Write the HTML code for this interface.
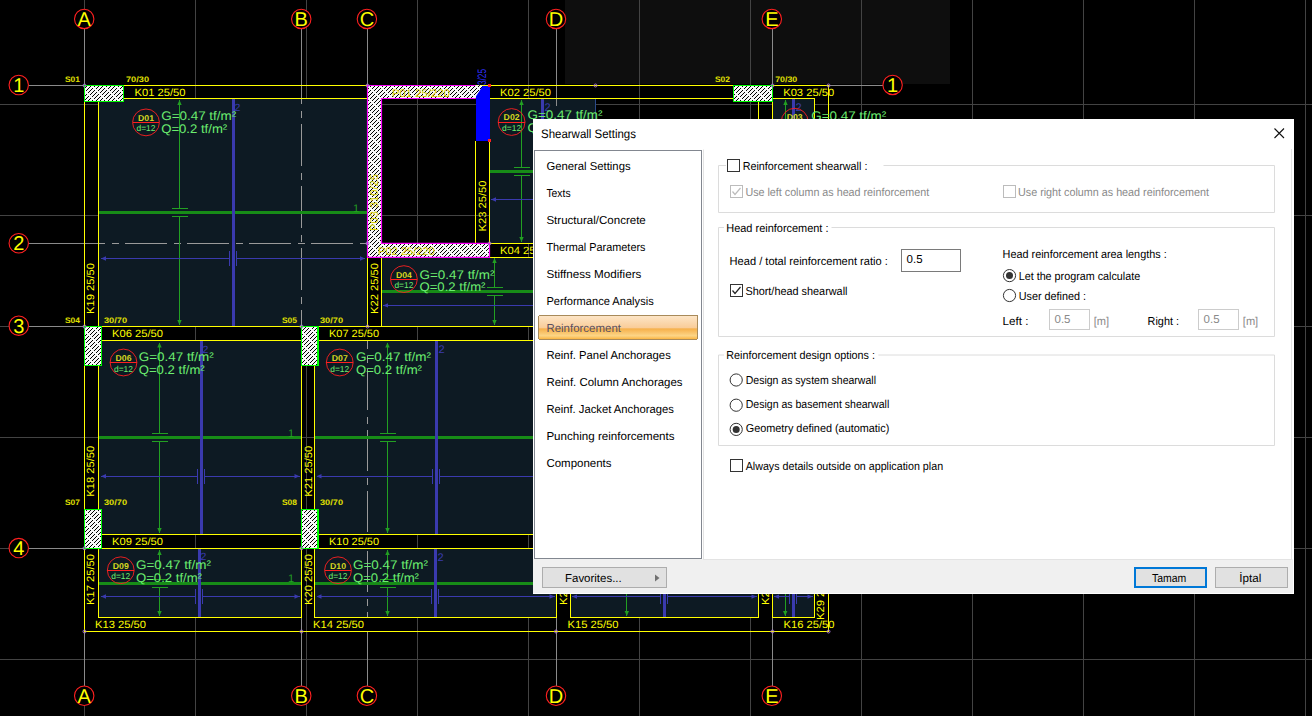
<!DOCTYPE html>
<html><head><meta charset="utf-8"><style>
html,body{margin:0;padding:0;background:#000;width:1312px;height:716px;overflow:hidden;position:relative}
text{shape-rendering:auto}
circle,path{shape-rendering:geometricPrecision}
</style></head><body>
<svg width="1312" height="716" viewBox="0 0 1312 716" style="position:absolute;left:0;top:0" shape-rendering="crispEdges" text-rendering="geometricPrecision"><rect x="0" y="0" width="1312" height="716" fill="#000" stroke="none" stroke-width="1" /><rect x="565" y="0" width="385" height="83.5" fill="#0e0e0e" stroke="none" stroke-width="1" /><line x1="84.5" y1="0" x2="84.5" y2="716" stroke="#434343" stroke-width="1" /><line x1="195.5" y1="0" x2="195.5" y2="716" stroke="#434343" stroke-width="1" /><line x1="306.5" y1="0" x2="306.5" y2="716" stroke="#434343" stroke-width="1" /><line x1="417.5" y1="0" x2="417.5" y2="716" stroke="#434343" stroke-width="1" /><line x1="528.5" y1="0" x2="528.5" y2="716" stroke="#434343" stroke-width="1" /><line x1="639.5" y1="0" x2="639.5" y2="716" stroke="#434343" stroke-width="1" /><line x1="750.5" y1="0" x2="750.5" y2="716" stroke="#434343" stroke-width="1" /><line x1="861.5" y1="0" x2="861.5" y2="716" stroke="#434343" stroke-width="1" /><line x1="972.5" y1="0" x2="972.5" y2="716" stroke="#434343" stroke-width="1" /><line x1="1083.5" y1="0" x2="1083.5" y2="716" stroke="#434343" stroke-width="1" /><line x1="1194.5" y1="0" x2="1194.5" y2="716" stroke="#434343" stroke-width="1" /><line x1="1305.5" y1="0" x2="1305.5" y2="716" stroke="#434343" stroke-width="1" /><line x1="0" y1="104.5" x2="1312" y2="104.5" stroke="#434343" stroke-width="1" /><line x1="0" y1="215.5" x2="1312" y2="215.5" stroke="#434343" stroke-width="1" /><line x1="0" y1="326.5" x2="1312" y2="326.5" stroke="#434343" stroke-width="1" /><line x1="0" y1="437.5" x2="1312" y2="437.5" stroke="#434343" stroke-width="1" /><line x1="0" y1="548.5" x2="1312" y2="548.5" stroke="#434343" stroke-width="1" /><line x1="0" y1="659.5" x2="1312" y2="659.5" stroke="#434343" stroke-width="1" /><rect x="98.5" y="98.5" width="269.0" height="228.0" fill="#0d1a23" stroke="none" stroke-width="1" /><rect x="489.5" y="98.5" width="106.0" height="144.9" fill="#0d1a23" stroke="none" stroke-width="1" /><rect x="772.5" y="98.5" width="42.0" height="31.5" fill="#0d1a23" stroke="none" stroke-width="1" /><rect x="381.5" y="257.3" width="158.5" height="69.19999999999999" fill="#0d1a23" stroke="none" stroke-width="1" /><rect x="98.5" y="340.75" width="203.0" height="194.0" fill="#0d1a23" stroke="none" stroke-width="1" /><rect x="314.5" y="340.75" width="225.5" height="194.0" fill="#0d1a23" stroke="none" stroke-width="1" /><rect x="98.5" y="548.25" width="203.0" height="69.25" fill="#0d1a23" stroke="none" stroke-width="1" /><rect x="314.5" y="548.25" width="241.5" height="69.25" fill="#0d1a23" stroke="none" stroke-width="1" /><rect x="570.5" y="560" width="188.0" height="57.5" fill="#0d1a23" stroke="none" stroke-width="1" /><rect x="772.5" y="560" width="42.0" height="57.5" fill="#0d1a23" stroke="none" stroke-width="1" /><line x1="98.5" y1="243.3" x2="367.5" y2="243.3" stroke="#9a9a9a" stroke-width="1" stroke-dasharray="42 7 7 6" stroke-dashoffset="35.5"/><line x1="301.5" y1="98.5" x2="301.5" y2="326.5" stroke="#9a9a9a" stroke-width="1" stroke-dasharray="42 7 7 6" stroke-dashoffset="36.5"/><line x1="367.5" y1="340.75" x2="367.5" y2="534.75" stroke="#9a9a9a" stroke-width="1" stroke-dasharray="41 7 7 6" stroke-dashoffset="33.25"/><line x1="367.5" y1="548.25" x2="367.5" y2="617.5" stroke="#9a9a9a" stroke-width="1" stroke-dasharray="41 7 7 6" stroke-dashoffset="58.25"/><line x1="84.5" y1="29" x2="84.5" y2="85.5" stroke="#8a8a8a" stroke-width="1" /><line x1="301.5" y1="29" x2="301.5" y2="85.5" stroke="#8a8a8a" stroke-width="1" /><line x1="367.5" y1="29" x2="367.5" y2="85.5" stroke="#8a8a8a" stroke-width="1" /><line x1="556.5" y1="29" x2="556.5" y2="85.5" stroke="#8a8a8a" stroke-width="1" /><line x1="772.5" y1="29" x2="772.5" y2="85.5" stroke="#8a8a8a" stroke-width="1" /><line x1="301.5" y1="85.5" x2="301.5" y2="98.5" stroke="#8a8a8a" stroke-width="1" /><line x1="556.5" y1="85.5" x2="556.5" y2="106" stroke="#8a8a8a" stroke-width="1" /><line x1="84.5" y1="631.5" x2="84.5" y2="686" stroke="#8a8a8a" stroke-width="1" /><line x1="301.5" y1="631.5" x2="301.5" y2="686" stroke="#8a8a8a" stroke-width="1" /><line x1="367.5" y1="631.5" x2="367.5" y2="686" stroke="#8a8a8a" stroke-width="1" /><line x1="556.5" y1="631.5" x2="556.5" y2="686" stroke="#8a8a8a" stroke-width="1" /><line x1="772.5" y1="631.5" x2="772.5" y2="686" stroke="#8a8a8a" stroke-width="1" /><line x1="301.5" y1="617.5" x2="301.5" y2="631.5" stroke="#8a8a8a" stroke-width="1" /><line x1="556.5" y1="617.5" x2="556.5" y2="631.5" stroke="#8a8a8a" stroke-width="1" /><line x1="772.5" y1="617.5" x2="772.5" y2="631.5" stroke="#8a8a8a" stroke-width="1" /><line x1="28.75" y1="85.5" x2="84.5" y2="85.5" stroke="#8a8a8a" stroke-width="1" /><line x1="28.75" y1="243.5" x2="84.5" y2="243.5" stroke="#8a8a8a" stroke-width="1" /><line x1="28.75" y1="326.5" x2="84.5" y2="326.5" stroke="#8a8a8a" stroke-width="1" /><line x1="28.75" y1="548.5" x2="84.5" y2="548.5" stroke="#8a8a8a" stroke-width="1" /><line x1="84.5" y1="243.5" x2="98.5" y2="243.5" stroke="#8a8a8a" stroke-width="1" /><line x1="828.5" y1="85.5" x2="883" y2="85.5" stroke="#8a8a8a" stroke-width="1" /><line x1="179.5" y1="100" x2="179.5" y2="208.5" stroke="#22a022" stroke-width="1" /><line x1="179.5" y1="216.5" x2="179.5" y2="325" stroke="#22a022" stroke-width="1" /><line x1="171.5" y1="208.5" x2="187.5" y2="208.5" stroke="#22a022" stroke-width="1" /><line x1="171.5" y1="216.5" x2="187.5" y2="216.5" stroke="#22a022" stroke-width="1" /><path d="M177.3,105 L179.5,100 L181.7,105Z" fill="#22a022"/><path d="M177.3,320 L179.5,325 L181.7,320Z" fill="#22a022"/><line x1="98.5" y1="212.5" x2="367.5" y2="212.5" stroke="#178c17" stroke-width="3" /><line x1="101" y1="258.5" x2="229.5" y2="258.5" stroke="#3a3aae" stroke-width="1" /><line x1="236.5" y1="258.5" x2="365" y2="258.5" stroke="#3a3aae" stroke-width="1" /><path d="M106,256.3 L101,258.5 L106,260.7Z" fill="#3a3aae"/><path d="M360,256.3 L365,258.5 L360,260.7Z" fill="#3a3aae"/><line x1="229.5" y1="251.0" x2="229.5" y2="266.0" stroke="#3a3aae" stroke-width="1" /><line x1="236.5" y1="251.0" x2="236.5" y2="266.0" stroke="#3a3aae" stroke-width="1" /><line x1="233.5" y1="98.5" x2="233.5" y2="326.5" stroke="#3a3aae" stroke-width="3" /><text x="234.5" y="110.5" font-family="Liberation Sans" font-size="10.5" fill="#3a3aae" text-anchor="start" font-weight="normal" >2</text><text x="353" y="212" font-family="Liberation Sans" font-size="11" fill="#22a022" text-anchor="start" font-weight="normal" >1</text><line x1="521.5" y1="100" x2="521.5" y2="167.5" stroke="#22a022" stroke-width="1" /><line x1="521.5" y1="175.5" x2="521.5" y2="242" stroke="#22a022" stroke-width="1" /><line x1="513.5" y1="167.5" x2="529.5" y2="167.5" stroke="#22a022" stroke-width="1" /><line x1="513.5" y1="175.5" x2="529.5" y2="175.5" stroke="#22a022" stroke-width="1" /><path d="M519.3,105 L521.5,100 L523.7,105Z" fill="#22a022"/><path d="M519.3,237 L521.5,242 L523.7,237Z" fill="#22a022"/><line x1="489.5" y1="171.6" x2="540" y2="171.6" stroke="#178c17" stroke-width="3" /><line x1="491" y1="199.5" x2="540" y2="199.5" stroke="#3a3aae" stroke-width="1" /><path d="M496,197.3 L491,199.5 L496,201.7Z" fill="#3a3aae"/><line x1="542.5" y1="98.5" x2="542.5" y2="130" stroke="#3a3aae" stroke-width="3" /><text x="544.5" y="110.5" font-family="Liberation Sans" font-size="11" fill="#3a3aae" text-anchor="start" font-weight="normal" >2</text><line x1="595.5" y1="98.5" x2="595.5" y2="130" stroke="#2a4a8a" stroke-width="1" /><line x1="785.5" y1="100" x2="785.5" y2="130" stroke="#22a022" stroke-width="1" /><path d="M783.3,105 L785.5,100 L787.7,105Z" fill="#22a022"/><line x1="793.5" y1="98.5" x2="793.5" y2="130" stroke="#3a3aae" stroke-width="3" /><text x="795.5" y="110.5" font-family="Liberation Sans" font-size="11" fill="#3a3aae" text-anchor="start" font-weight="normal" >2</text><line x1="494.5" y1="258" x2="494.5" y2="287.2" stroke="#22a022" stroke-width="1" /><line x1="494.5" y1="295.2" x2="494.5" y2="325" stroke="#22a022" stroke-width="1" /><line x1="486.5" y1="287.2" x2="502.5" y2="287.2" stroke="#22a022" stroke-width="1" /><line x1="486.5" y1="295.2" x2="502.5" y2="295.2" stroke="#22a022" stroke-width="1" /><path d="M492.3,263 L494.5,258 L496.7,263Z" fill="#22a022"/><path d="M492.3,320 L494.5,325 L496.7,320Z" fill="#22a022"/><line x1="381.5" y1="291.7" x2="540" y2="291.7" stroke="#178c17" stroke-width="3" /><line x1="383" y1="305.4" x2="540" y2="305.4" stroke="#3a3aae" stroke-width="1" /><path d="M388,303.2 L383,305.4 L388,307.59999999999997Z" fill="#3a3aae"/><line x1="159.5" y1="342.5" x2="159.5" y2="433.5" stroke="#22a022" stroke-width="1" /><line x1="159.5" y1="441.5" x2="159.5" y2="533" stroke="#22a022" stroke-width="1" /><line x1="151.5" y1="433.5" x2="167.5" y2="433.5" stroke="#22a022" stroke-width="1" /><line x1="151.5" y1="441.5" x2="167.5" y2="441.5" stroke="#22a022" stroke-width="1" /><path d="M157.3,347.5 L159.5,342.5 L161.7,347.5Z" fill="#22a022"/><path d="M157.3,528 L159.5,533 L161.7,528Z" fill="#22a022"/><line x1="98.5" y1="437.5" x2="301.5" y2="437.5" stroke="#178c17" stroke-width="3" /><line x1="101" y1="476.25" x2="197.5" y2="476.25" stroke="#3a3aae" stroke-width="1" /><line x1="204.5" y1="476.25" x2="299.5" y2="476.25" stroke="#3a3aae" stroke-width="1" /><path d="M106,474.05 L101,476.25 L106,478.45Z" fill="#3a3aae"/><path d="M294.5,474.05 L299.5,476.25 L294.5,478.45Z" fill="#3a3aae"/><line x1="197.5" y1="468.75" x2="197.5" y2="483.75" stroke="#3a3aae" stroke-width="1" /><line x1="204.5" y1="468.75" x2="204.5" y2="483.75" stroke="#3a3aae" stroke-width="1" /><line x1="201.5" y1="340.75" x2="201.5" y2="534.75" stroke="#3a3aae" stroke-width="3" /><text x="202.5" y="352.75" font-family="Liberation Sans" font-size="10.5" fill="#3a3aae" text-anchor="start" font-weight="normal" >2</text><text x="288" y="437" font-family="Liberation Sans" font-size="11" fill="#22a022" text-anchor="start" font-weight="normal" >1</text><line x1="387.5" y1="342.5" x2="387.5" y2="433.5" stroke="#22a022" stroke-width="1" /><line x1="387.5" y1="441.5" x2="387.5" y2="533" stroke="#22a022" stroke-width="1" /><line x1="379.5" y1="433.5" x2="395.5" y2="433.5" stroke="#22a022" stroke-width="1" /><line x1="379.5" y1="441.5" x2="395.5" y2="441.5" stroke="#22a022" stroke-width="1" /><path d="M385.3,347.5 L387.5,342.5 L389.7,347.5Z" fill="#22a022"/><path d="M385.3,528 L387.5,533 L389.7,528Z" fill="#22a022"/><line x1="314.5" y1="437.5" x2="540" y2="437.5" stroke="#178c17" stroke-width="3" /><line x1="316.5" y1="476.25" x2="432.5" y2="476.25" stroke="#3a3aae" stroke-width="1" /><line x1="439.5" y1="476.25" x2="540" y2="476.25" stroke="#3a3aae" stroke-width="1" /><path d="M321.5,474.05 L316.5,476.25 L321.5,478.45Z" fill="#3a3aae"/><line x1="432.5" y1="468.75" x2="432.5" y2="483.75" stroke="#3a3aae" stroke-width="1" /><line x1="439.5" y1="468.75" x2="439.5" y2="483.75" stroke="#3a3aae" stroke-width="1" /><line x1="436.25" y1="340.75" x2="436.25" y2="534.75" stroke="#3a3aae" stroke-width="3" /><text x="438.5" y="352.5" font-family="Liberation Sans" font-size="11" fill="#3a3aae" text-anchor="start" font-weight="normal" >2</text><line x1="159.5" y1="550" x2="159.5" y2="579.25" stroke="#22a022" stroke-width="1" /><line x1="159.5" y1="587.25" x2="159.5" y2="616" stroke="#22a022" stroke-width="1" /><line x1="151.5" y1="579.25" x2="167.5" y2="579.25" stroke="#22a022" stroke-width="1" /><line x1="151.5" y1="587.25" x2="167.5" y2="587.25" stroke="#22a022" stroke-width="1" /><path d="M157.3,555 L159.5,550 L161.7,555Z" fill="#22a022"/><path d="M157.3,611 L159.5,616 L161.7,611Z" fill="#22a022"/><line x1="98.5" y1="583.25" x2="301.5" y2="583.25" stroke="#178c17" stroke-width="3" /><line x1="101" y1="596.5" x2="195.5" y2="596.5" stroke="#3a3aae" stroke-width="1" /><line x1="202.5" y1="596.5" x2="299.5" y2="596.5" stroke="#3a3aae" stroke-width="1" /><path d="M106,594.3 L101,596.5 L106,598.7Z" fill="#3a3aae"/><path d="M294.5,594.3 L299.5,596.5 L294.5,598.7Z" fill="#3a3aae"/><line x1="195.5" y1="589.0" x2="195.5" y2="604.0" stroke="#3a3aae" stroke-width="1" /><line x1="202.5" y1="589.0" x2="202.5" y2="604.0" stroke="#3a3aae" stroke-width="1" /><line x1="199.5" y1="548.25" x2="199.5" y2="617.5" stroke="#3a3aae" stroke-width="3" /><text x="200.5" y="560.25" font-family="Liberation Sans" font-size="10.5" fill="#3a3aae" text-anchor="start" font-weight="normal" >2</text><text x="288" y="582" font-family="Liberation Sans" font-size="11" fill="#22a022" text-anchor="start" font-weight="normal" >1</text><line x1="387.5" y1="550" x2="387.5" y2="579.25" stroke="#22a022" stroke-width="1" /><line x1="387.5" y1="587.25" x2="387.5" y2="616" stroke="#22a022" stroke-width="1" /><line x1="379.5" y1="579.25" x2="395.5" y2="579.25" stroke="#22a022" stroke-width="1" /><line x1="379.5" y1="587.25" x2="395.5" y2="587.25" stroke="#22a022" stroke-width="1" /><path d="M385.3,555 L387.5,550 L389.7,555Z" fill="#22a022"/><path d="M385.3,611 L387.5,616 L389.7,611Z" fill="#22a022"/><line x1="314.5" y1="583.25" x2="540" y2="583.25" stroke="#178c17" stroke-width="3" /><line x1="316.5" y1="596.5" x2="431.5" y2="596.5" stroke="#3a3aae" stroke-width="1" /><line x1="438.5" y1="596.5" x2="554.5" y2="596.5" stroke="#3a3aae" stroke-width="1" /><path d="M321.5,594.3 L316.5,596.5 L321.5,598.7Z" fill="#3a3aae"/><path d="M549.5,594.3 L554.5,596.5 L549.5,598.7Z" fill="#3a3aae"/><line x1="431.5" y1="589" x2="431.5" y2="604" stroke="#3a3aae" stroke-width="1" /><line x1="438.5" y1="589" x2="438.5" y2="604" stroke="#3a3aae" stroke-width="1" /><line x1="435.5" y1="548.25" x2="435.5" y2="617.5" stroke="#3a3aae" stroke-width="3" /><text x="437.5" y="560.5" font-family="Liberation Sans" font-size="11" fill="#3a3aae" text-anchor="start" font-weight="normal" >2</text><line x1="626.8" y1="590" x2="626.8" y2="616" stroke="#22a022" stroke-width="1" /><path d="M624.6,611 L626.8,616 L629,611Z" fill="#22a022"/><line x1="572" y1="596.6" x2="660.5" y2="596.6" stroke="#3a3aae" stroke-width="1" /><line x1="667.5" y1="596.6" x2="756.5" y2="596.6" stroke="#3a3aae" stroke-width="1" /><path d="M577,594.4 L572,596.6 L577,598.8000000000001Z" fill="#3a3aae"/><path d="M751.5,594.4 L756.5,596.6 L751.5,598.8000000000001Z" fill="#3a3aae"/><line x1="660.5" y1="589" x2="660.5" y2="604" stroke="#3a3aae" stroke-width="1" /><line x1="667.5" y1="589" x2="667.5" y2="604" stroke="#3a3aae" stroke-width="1" /><line x1="664.5" y1="590" x2="664.5" y2="617.5" stroke="#3a3aae" stroke-width="3" /><line x1="785.2" y1="590" x2="785.2" y2="616" stroke="#22a022" stroke-width="1" /><path d="M783,611 L785.2,616 L787.4,611Z" fill="#22a022"/><line x1="774" y1="596.6" x2="789.5" y2="596.6" stroke="#3a3aae" stroke-width="1" /><line x1="796.5" y1="596.6" x2="812.5" y2="596.6" stroke="#3a3aae" stroke-width="1" /><path d="M779,594.4 L774,596.6 L779,598.8000000000001Z" fill="#3a3aae"/><path d="M807.5,594.4 L812.5,596.6 L807.5,598.8000000000001Z" fill="#3a3aae"/><line x1="789.5" y1="589" x2="789.5" y2="604" stroke="#3a3aae" stroke-width="1" /><line x1="796.5" y1="589" x2="796.5" y2="604" stroke="#3a3aae" stroke-width="1" /><line x1="793.5" y1="590" x2="793.5" y2="617.5" stroke="#3a3aae" stroke-width="3" /><line x1="84.5" y1="85.5" x2="828.5" y2="85.5" stroke="#ffff00" stroke-width="1" /><line x1="98.5" y1="98.5" x2="367.5" y2="98.5" stroke="#ffff00" stroke-width="1" /><line x1="489.5" y1="98.5" x2="733.5" y2="98.5" stroke="#ffff00" stroke-width="1" /><line x1="772.5" y1="98.5" x2="814.5" y2="98.5" stroke="#ffff00" stroke-width="1" /><line x1="84.5" y1="85.5" x2="84.5" y2="631.5" stroke="#ffff00" stroke-width="1" /><line x1="98.5" y1="98.5" x2="98.5" y2="617.5" stroke="#ffff00" stroke-width="1" /><line x1="828.5" y1="85.5" x2="828.5" y2="130" stroke="#ffff00" stroke-width="1" /><line x1="758.5" y1="101.5" x2="758.5" y2="130" stroke="#ffff00" stroke-width="1" /><line x1="772.5" y1="101.5" x2="772.5" y2="130" stroke="#ffff00" stroke-width="1" /><line x1="814.5" y1="98.5" x2="814.5" y2="130" stroke="#ffff00" stroke-width="1" /><line x1="367.5" y1="257.3" x2="367.5" y2="326.5" stroke="#ffff00" stroke-width="1" /><line x1="381.5" y1="257.3" x2="381.5" y2="326.5" stroke="#ffff00" stroke-width="1" /><line x1="475.5" y1="140.7" x2="475.5" y2="243.4" stroke="#ffff00" stroke-width="1" /><line x1="489.5" y1="140.7" x2="489.5" y2="243.4" stroke="#ffff00" stroke-width="1" /><line x1="489.5" y1="243.4" x2="540" y2="243.4" stroke="#ffff00" stroke-width="1" /><line x1="489.5" y1="257.3" x2="540" y2="257.3" stroke="#ffff00" stroke-width="1" /><line x1="84.5" y1="326.5" x2="540" y2="326.5" stroke="#ffff00" stroke-width="1" /><line x1="101.5" y1="340.75" x2="301.5" y2="340.75" stroke="#ffff00" stroke-width="1" /><line x1="318" y1="340.75" x2="540" y2="340.75" stroke="#ffff00" stroke-width="1" /><line x1="301.5" y1="326.5" x2="301.5" y2="617.5" stroke="#ffff00" stroke-width="1" /><line x1="314.5" y1="340.75" x2="314.5" y2="617.5" stroke="#ffff00" stroke-width="1" /><line x1="98.5" y1="534.75" x2="540" y2="534.75" stroke="#ffff00" stroke-width="1" /><line x1="84.5" y1="548.25" x2="540" y2="548.25" stroke="#ffff00" stroke-width="1" /><line x1="98.5" y1="617.5" x2="301.5" y2="617.5" stroke="#ffff00" stroke-width="1" /><line x1="314.5" y1="617.5" x2="556" y2="617.5" stroke="#ffff00" stroke-width="1" /><line x1="570.5" y1="617.5" x2="758.5" y2="617.5" stroke="#ffff00" stroke-width="1" /><line x1="772.5" y1="617.5" x2="814.5" y2="617.5" stroke="#ffff00" stroke-width="1" /><line x1="84.5" y1="631.5" x2="828.5" y2="631.5" stroke="#ffff00" stroke-width="1" /><line x1="556" y1="560" x2="556" y2="617.5" stroke="#ffff00" stroke-width="1" /><line x1="570.5" y1="560" x2="570.5" y2="617.5" stroke="#ffff00" stroke-width="1" /><line x1="758.5" y1="560" x2="758.5" y2="617.5" stroke="#ffff00" stroke-width="1" /><line x1="772.5" y1="560" x2="772.5" y2="617.5" stroke="#ffff00" stroke-width="1" /><line x1="814.5" y1="560" x2="814.5" y2="617.5" stroke="#ffff00" stroke-width="1" /><line x1="828.5" y1="560" x2="828.5" y2="631.5" stroke="#ffff00" stroke-width="1" /><defs><pattern id="hat" patternUnits="userSpaceOnUse" width="12" height="12"><rect width="12" height="12" fill="#f8f8f8"/><path d="M0,0h1v1h-1zM4,0h1v1h-1zM8,0h1v1h-1zM3,1h1v1h-1zM11,1h1v1h-1zM2,2h1v1h-1zM6,2h1v1h-1zM10,2h1v1h-1zM1,3h1v1h-1zM5,3h1v1h-1zM0,4h1v1h-1zM4,4h1v1h-1zM8,4h1v1h-1zM3,5h1v1h-1zM7,5h1v1h-1zM2,6h1v1h-1zM6,6h1v1h-1zM10,6h1v1h-1zM5,7h1v1h-1zM9,7h1v1h-1zM0,8h1v1h-1zM4,8h1v1h-1zM8,8h1v1h-1zM7,9h1v1h-1zM11,9h1v1h-1zM2,10h1v1h-1zM6,10h1v1h-1zM10,10h1v1h-1zM1,11h1v1h-1zM9,11h1v1h-1z" fill="#000" shape-rendering="crispEdges"/></pattern></defs><rect x="84.5" y="85.5" width="39.0" height="16.0" fill="url(#hat)" stroke="#00ff00" stroke-width="1.5" /><rect x="733.5" y="85.5" width="39.0" height="16.0" fill="url(#hat)" stroke="#00ff00" stroke-width="1.5" /><rect x="84.5" y="326.5" width="17.0" height="39.0" fill="url(#hat)" stroke="#00ff00" stroke-width="1.5" /><rect x="301.5" y="326.5" width="16.5" height="39.0" fill="url(#hat)" stroke="#00ff00" stroke-width="1.5" /><rect x="84.5" y="509.25" width="17.0" height="39.0" fill="url(#hat)" stroke="#00ff00" stroke-width="1.5" /><rect x="301.5" y="509.25" width="16.5" height="39.0" fill="url(#hat)" stroke="#00ff00" stroke-width="1.5" /><path d="M367.5,85.5 H481 L475.5,98.5 H381.5 V243.4 H489.5 V257.3 H367.5 Z" fill="url(#hat)"/><path d="M475.5,85.5 H367.5 V257.3 H489.5 V243.4 H381.5 V98.5 H475.5" fill="none" stroke="#ff00ff" stroke-width="1.2"/><rect x="475.5" y="85.5" width="14.0" height="55.19999999999999" fill="#0000ff" stroke="none" stroke-width="1" /><path d="M475.5,85.5 H483 L475.5,97 Z" fill="url(#hat)"/><rect x="488" y="84" width="3" height="3" fill="#ff2020" stroke="none" stroke-width="1" /><rect x="488" y="139.2" width="3" height="3.0" fill="#ff2020" stroke="none" stroke-width="1" /><text x="392" y="96.5" font-family="Liberation Sans" font-size="11" fill="#d8d000" text-anchor="start" font-weight="normal" textLength="58" lengthAdjust="spacingAndGlyphs" >P01 25/220</text><text x="378" y="254.8" font-family="Liberation Sans" font-size="11" fill="#d8d000" text-anchor="start" font-weight="normal" textLength="57" lengthAdjust="spacingAndGlyphs" >P02 25/220</text><text x="378" y="231" font-family="Liberation Sans" font-size="11" fill="#d8d000" text-anchor="start" font-weight="normal" textLength="57" lengthAdjust="spacingAndGlyphs" transform="rotate(-90 378 231)" >P03 310/25</text><text x="485.5" y="85" font-family="Liberation Sans" font-size="12" fill="#3030ff" text-anchor="start" font-weight="normal" textLength="16" lengthAdjust="spacingAndGlyphs" transform="rotate(-90 485.5 85)" >3/25</text><circle cx="84.5" cy="85.5" r="1.5" fill="none" stroke="#a070d0" stroke-width="1"/><circle cx="367.5" cy="85.5" r="1.5" fill="none" stroke="#a070d0" stroke-width="1"/><circle cx="595.5" cy="85.5" r="1.5" fill="none" stroke="#a070d0" stroke-width="1"/><circle cx="772.5" cy="85.5" r="1.5" fill="none" stroke="#a070d0" stroke-width="1"/><circle cx="828.5" cy="85.5" r="1.5" fill="none" stroke="#a070d0" stroke-width="1"/><circle cx="84.5" cy="326.5" r="1.5" fill="none" stroke="#a070d0" stroke-width="1"/><circle cx="301.5" cy="326.5" r="1.5" fill="none" stroke="#a070d0" stroke-width="1"/><circle cx="367.5" cy="243.4" r="1.5" fill="none" stroke="#a070d0" stroke-width="1"/><circle cx="489.5" cy="243.4" r="1.5" fill="none" stroke="#a070d0" stroke-width="1"/><circle cx="367.5" cy="326.5" r="1.5" fill="none" stroke="#a070d0" stroke-width="1"/><circle cx="84.5" cy="548.25" r="1.5" fill="none" stroke="#a070d0" stroke-width="1"/><circle cx="301.5" cy="548.25" r="1.5" fill="none" stroke="#a070d0" stroke-width="1"/><circle cx="84.5" cy="631.5" r="1.5" fill="none" stroke="#a070d0" stroke-width="1"/><circle cx="301.5" cy="631.5" r="1.5" fill="none" stroke="#a070d0" stroke-width="1"/><circle cx="556" cy="631.5" r="1.5" fill="none" stroke="#a070d0" stroke-width="1"/><circle cx="772.5" cy="631.5" r="1.5" fill="none" stroke="#a070d0" stroke-width="1"/><circle cx="828.5" cy="631.5" r="1.5" fill="none" stroke="#a070d0" stroke-width="1"/><text x="134.5" y="96.0" font-family="Liberation Sans" font-size="10.5" fill="#ffff00" text-anchor="start" font-weight="normal" textLength="51" lengthAdjust="spacingAndGlyphs" >K01 25/50</text><text x="500" y="96.0" font-family="Liberation Sans" font-size="10.5" fill="#ffff00" text-anchor="start" font-weight="normal" textLength="51" lengthAdjust="spacingAndGlyphs" >K02 25/50</text><text x="783.2" y="96.3" font-family="Liberation Sans" font-size="10.5" fill="#ffff00" text-anchor="start" font-weight="normal" textLength="51" lengthAdjust="spacingAndGlyphs" >K03 25/50</text><text x="500" y="253.8" font-family="Liberation Sans" font-size="10.5" fill="#ffff00" text-anchor="start" font-weight="normal" textLength="51" lengthAdjust="spacingAndGlyphs" >K04 25/50</text><text x="112" y="336.75" font-family="Liberation Sans" font-size="10.5" fill="#ffff00" text-anchor="start" font-weight="normal" textLength="51" lengthAdjust="spacingAndGlyphs" >K06 25/50</text><text x="329" y="336.75" font-family="Liberation Sans" font-size="10.5" fill="#ffff00" text-anchor="start" font-weight="normal" textLength="50" lengthAdjust="spacingAndGlyphs" >K07 25/50</text><text x="112" y="545.0" font-family="Liberation Sans" font-size="10.5" fill="#ffff00" text-anchor="start" font-weight="normal" textLength="51" lengthAdjust="spacingAndGlyphs" >K09 25/50</text><text x="329" y="545.0" font-family="Liberation Sans" font-size="10.5" fill="#ffff00" text-anchor="start" font-weight="normal" textLength="50" lengthAdjust="spacingAndGlyphs" >K10 25/50</text><text x="95" y="628.0" font-family="Liberation Sans" font-size="10.5" fill="#ffff00" text-anchor="start" font-weight="normal" textLength="51" lengthAdjust="spacingAndGlyphs" >K13 25/50</text><text x="313" y="628.0" font-family="Liberation Sans" font-size="10.5" fill="#ffff00" text-anchor="start" font-weight="normal" textLength="51" lengthAdjust="spacingAndGlyphs" >K14 25/50</text><text x="567.5" y="628.0" font-family="Liberation Sans" font-size="10.5" fill="#ffff00" text-anchor="start" font-weight="normal" textLength="51" lengthAdjust="spacingAndGlyphs" >K15 25/50</text><text x="783.5" y="628.0" font-family="Liberation Sans" font-size="10.5" fill="#ffff00" text-anchor="start" font-weight="normal" textLength="51" lengthAdjust="spacingAndGlyphs" >K16 25/50</text><text x="94.3" y="314" font-family="Liberation Sans" font-size="10.5" fill="#ffff00" text-anchor="start" font-weight="normal" textLength="51" lengthAdjust="spacingAndGlyphs" transform="rotate(-90 94.3 314)" >K19 25/50</text><text x="94.3" y="496.75" font-family="Liberation Sans" font-size="10.5" fill="#ffff00" text-anchor="start" font-weight="normal" textLength="51" lengthAdjust="spacingAndGlyphs" transform="rotate(-90 94.3 496.75)" >K18 25/50</text><text x="94.3" y="605" font-family="Liberation Sans" font-size="10.5" fill="#ffff00" text-anchor="start" font-weight="normal" textLength="51" lengthAdjust="spacingAndGlyphs" transform="rotate(-90 94.3 605)" >K17 25/50</text><text x="378.3" y="314" font-family="Liberation Sans" font-size="10.5" fill="#ffff00" text-anchor="start" font-weight="normal" textLength="51" lengthAdjust="spacingAndGlyphs" transform="rotate(-90 378.3 314)" >K22 25/50</text><text x="485.55" y="231.5" font-family="Liberation Sans" font-size="10.5" fill="#ffff00" text-anchor="start" font-weight="normal" textLength="51" lengthAdjust="spacingAndGlyphs" transform="rotate(-90 485.55 231.5)" >K23 25/50</text><text x="312.3" y="496.75" font-family="Liberation Sans" font-size="10.5" fill="#ffff00" text-anchor="start" font-weight="normal" textLength="51" lengthAdjust="spacingAndGlyphs" transform="rotate(-90 312.3 496.75)" >K21 25/50</text><text x="312.3" y="605" font-family="Liberation Sans" font-size="10.5" fill="#ffff00" text-anchor="start" font-weight="normal" textLength="51" lengthAdjust="spacingAndGlyphs" transform="rotate(-90 312.3 605)" >K20 25/50</text><text x="567.0999999999999" y="605" font-family="Liberation Sans" font-size="10.5" fill="#ffff00" text-anchor="start" font-weight="normal" textLength="51" lengthAdjust="spacingAndGlyphs" transform="rotate(-90 567.0999999999999 605)" >K24 25/50</text><text x="769.3" y="605" font-family="Liberation Sans" font-size="10.5" fill="#ffff00" text-anchor="start" font-weight="normal" textLength="51" lengthAdjust="spacingAndGlyphs" transform="rotate(-90 769.3 605)" >K25 25/50</text><text x="824.3" y="620" font-family="Liberation Sans" font-size="10.5" fill="#ffff00" text-anchor="start" font-weight="normal" textLength="51" lengthAdjust="spacingAndGlyphs" transform="rotate(-90 824.3 620)" >K29 25/50</text><text x="65" y="81.8" font-family="Liberation Sans" font-size="8" fill="#e0e000" text-anchor="start" font-weight="bold" textLength="15" lengthAdjust="spacingAndGlyphs" >S01</text><text x="126" y="81.8" font-family="Liberation Sans" font-size="8" fill="#e0e000" text-anchor="start" font-weight="bold" textLength="23" lengthAdjust="spacingAndGlyphs" >70/30</text><text x="715" y="81.8" font-family="Liberation Sans" font-size="8" fill="#e0e000" text-anchor="start" font-weight="bold" textLength="15" lengthAdjust="spacingAndGlyphs" >S02</text><text x="775.2" y="81.8" font-family="Liberation Sans" font-size="8" fill="#e0e000" text-anchor="start" font-weight="bold" textLength="22" lengthAdjust="spacingAndGlyphs" >70/30</text><text x="65" y="322.55" font-family="Liberation Sans" font-size="8" fill="#e0e000" text-anchor="start" font-weight="bold" textLength="15" lengthAdjust="spacingAndGlyphs" >S04</text><text x="104" y="322.55" font-family="Liberation Sans" font-size="8" fill="#e0e000" text-anchor="start" font-weight="bold" textLength="23" lengthAdjust="spacingAndGlyphs" >30/70</text><text x="282" y="322.55" font-family="Liberation Sans" font-size="8" fill="#e0e000" text-anchor="start" font-weight="bold" textLength="15" lengthAdjust="spacingAndGlyphs" >S05</text><text x="320" y="322.55" font-family="Liberation Sans" font-size="8" fill="#e0e000" text-anchor="start" font-weight="bold" textLength="23" lengthAdjust="spacingAndGlyphs" >30/70</text><text x="65" y="505.3" font-family="Liberation Sans" font-size="8" fill="#e0e000" text-anchor="start" font-weight="bold" textLength="15" lengthAdjust="spacingAndGlyphs" >S07</text><text x="104" y="505.3" font-family="Liberation Sans" font-size="8" fill="#e0e000" text-anchor="start" font-weight="bold" textLength="23" lengthAdjust="spacingAndGlyphs" >30/70</text><text x="282" y="505.3" font-family="Liberation Sans" font-size="8" fill="#e0e000" text-anchor="start" font-weight="bold" textLength="15" lengthAdjust="spacingAndGlyphs" >S08</text><text x="320" y="505.3" font-family="Liberation Sans" font-size="8" fill="#e0e000" text-anchor="start" font-weight="bold" textLength="23" lengthAdjust="spacingAndGlyphs" >30/70</text><circle cx="146" cy="122.4" r="13.4" fill="none" stroke="#ff2020" stroke-width="0.9"/><line x1="132.6" y1="122.4" x2="159.4" y2="122.4" stroke="#ff2020" stroke-width="1" /><text x="146" y="120.80000000000001" font-family="Liberation Sans" font-size="8.5" fill="#d8d820" text-anchor="middle" font-weight="bold" textLength="16" lengthAdjust="spacingAndGlyphs" >D01</text><text x="146" y="131.4" font-family="Liberation Sans" font-size="8.5" fill="#6cee70" text-anchor="middle" font-weight="normal" textLength="19" lengthAdjust="spacingAndGlyphs" >d=12</text><text x="161.2" y="120.0" font-family="Liberation Sans" font-size="12.5" fill="#6cee70" text-anchor="start" font-weight="normal" textLength="75" lengthAdjust="spacingAndGlyphs" >G=0.47 tf/m²</text><text x="161.2" y="132.8" font-family="Liberation Sans" font-size="12.5" fill="#6cee70" text-anchor="start" font-weight="normal" textLength="66" lengthAdjust="spacingAndGlyphs" >Q=0.2 tf/m²</text><circle cx="511.6" cy="122" r="13.4" fill="none" stroke="#ff2020" stroke-width="0.9"/><line x1="498.20000000000005" y1="122" x2="525.0" y2="122" stroke="#ff2020" stroke-width="1" /><text x="511.6" y="120.4" font-family="Liberation Sans" font-size="8.5" fill="#d8d820" text-anchor="middle" font-weight="bold" textLength="16" lengthAdjust="spacingAndGlyphs" >D02</text><text x="511.6" y="131" font-family="Liberation Sans" font-size="8.5" fill="#6cee70" text-anchor="middle" font-weight="normal" textLength="19" lengthAdjust="spacingAndGlyphs" >d=12</text><text x="527.5" y="119.0" font-family="Liberation Sans" font-size="12.5" fill="#6cee70" text-anchor="start" font-weight="normal" textLength="75" lengthAdjust="spacingAndGlyphs" >G=0.47 tf/m²</text><text x="527.5" y="131.8" font-family="Liberation Sans" font-size="12.5" fill="#6cee70" text-anchor="start" font-weight="normal" textLength="66" lengthAdjust="spacingAndGlyphs" >Q=0.2 tf/m²</text><circle cx="794.7" cy="121.7" r="13.4" fill="none" stroke="#ff2020" stroke-width="0.9"/><line x1="781.3000000000001" y1="121.7" x2="808.1" y2="121.7" stroke="#ff2020" stroke-width="1" /><text x="794.7" y="120.10000000000001" font-family="Liberation Sans" font-size="8.5" fill="#d8d820" text-anchor="middle" font-weight="bold" textLength="16" lengthAdjust="spacingAndGlyphs" >D03</text><text x="794.7" y="130.7" font-family="Liberation Sans" font-size="8.5" fill="#6cee70" text-anchor="middle" font-weight="normal" textLength="19" lengthAdjust="spacingAndGlyphs" >d=12</text><text x="811.2" y="119.7" font-family="Liberation Sans" font-size="12.5" fill="#6cee70" text-anchor="start" font-weight="normal" textLength="75" lengthAdjust="spacingAndGlyphs" >G=0.47 tf/m²</text><text x="811.2" y="132.5" font-family="Liberation Sans" font-size="12.5" fill="#6cee70" text-anchor="start" font-weight="normal" textLength="66" lengthAdjust="spacingAndGlyphs" >Q=0.2 tf/m²</text><circle cx="403.9" cy="279.1" r="13.4" fill="none" stroke="#ff2020" stroke-width="0.9"/><line x1="390.5" y1="279.1" x2="417.29999999999995" y2="279.1" stroke="#ff2020" stroke-width="1" /><text x="403.9" y="277.5" font-family="Liberation Sans" font-size="8.5" fill="#d8d820" text-anchor="middle" font-weight="bold" textLength="16" lengthAdjust="spacingAndGlyphs" >D04</text><text x="403.9" y="288.1" font-family="Liberation Sans" font-size="8.5" fill="#6cee70" text-anchor="middle" font-weight="normal" textLength="19" lengthAdjust="spacingAndGlyphs" >d=12</text><text x="419.5" y="278.5" font-family="Liberation Sans" font-size="12.5" fill="#6cee70" text-anchor="start" font-weight="normal" textLength="75" lengthAdjust="spacingAndGlyphs" >G=0.47 tf/m²</text><text x="419.5" y="290.8" font-family="Liberation Sans" font-size="12.5" fill="#6cee70" text-anchor="start" font-weight="normal" textLength="66" lengthAdjust="spacingAndGlyphs" >Q=0.2 tf/m²</text><circle cx="123.5" cy="362.5" r="13.4" fill="none" stroke="#ff2020" stroke-width="0.9"/><line x1="110.1" y1="362.5" x2="136.9" y2="362.5" stroke="#ff2020" stroke-width="1" /><text x="123.5" y="360.9" font-family="Liberation Sans" font-size="8.5" fill="#d8d820" text-anchor="middle" font-weight="bold" textLength="16" lengthAdjust="spacingAndGlyphs" >D06</text><text x="123.5" y="371.5" font-family="Liberation Sans" font-size="8.5" fill="#6cee70" text-anchor="middle" font-weight="normal" textLength="19" lengthAdjust="spacingAndGlyphs" >d=12</text><text x="138.75" y="360.5" font-family="Liberation Sans" font-size="12.5" fill="#6cee70" text-anchor="start" font-weight="normal" textLength="75" lengthAdjust="spacingAndGlyphs" >G=0.47 tf/m²</text><text x="138.75" y="373.5" font-family="Liberation Sans" font-size="12.5" fill="#6cee70" text-anchor="start" font-weight="normal" textLength="66" lengthAdjust="spacingAndGlyphs" >Q=0.2 tf/m²</text><circle cx="339.75" cy="362.5" r="13.4" fill="none" stroke="#ff2020" stroke-width="0.9"/><line x1="326.35" y1="362.5" x2="353.15" y2="362.5" stroke="#ff2020" stroke-width="1" /><text x="339.75" y="360.9" font-family="Liberation Sans" font-size="8.5" fill="#d8d820" text-anchor="middle" font-weight="bold" textLength="16" lengthAdjust="spacingAndGlyphs" >D07</text><text x="339.75" y="371.5" font-family="Liberation Sans" font-size="8.5" fill="#6cee70" text-anchor="middle" font-weight="normal" textLength="19" lengthAdjust="spacingAndGlyphs" >d=12</text><text x="356" y="360.5" font-family="Liberation Sans" font-size="12.5" fill="#6cee70" text-anchor="start" font-weight="normal" textLength="75" lengthAdjust="spacingAndGlyphs" >G=0.47 tf/m²</text><text x="356" y="373.5" font-family="Liberation Sans" font-size="12.5" fill="#6cee70" text-anchor="start" font-weight="normal" textLength="66" lengthAdjust="spacingAndGlyphs" >Q=0.2 tf/m²</text><circle cx="120.75" cy="570.25" r="13.4" fill="none" stroke="#ff2020" stroke-width="0.9"/><line x1="107.35" y1="570.25" x2="134.15" y2="570.25" stroke="#ff2020" stroke-width="1" /><text x="120.75" y="568.65" font-family="Liberation Sans" font-size="8.5" fill="#d8d820" text-anchor="middle" font-weight="bold" textLength="16" lengthAdjust="spacingAndGlyphs" >D09</text><text x="120.75" y="579.25" font-family="Liberation Sans" font-size="8.5" fill="#6cee70" text-anchor="middle" font-weight="normal" textLength="19" lengthAdjust="spacingAndGlyphs" >d=12</text><text x="136" y="569.0" font-family="Liberation Sans" font-size="12.5" fill="#6cee70" text-anchor="start" font-weight="normal" textLength="75" lengthAdjust="spacingAndGlyphs" >G=0.47 tf/m²</text><text x="136" y="581.5" font-family="Liberation Sans" font-size="12.5" fill="#6cee70" text-anchor="start" font-weight="normal" textLength="66" lengthAdjust="spacingAndGlyphs" >Q=0.2 tf/m²</text><circle cx="338" cy="570.25" r="13.4" fill="none" stroke="#ff2020" stroke-width="0.9"/><line x1="324.6" y1="570.25" x2="351.4" y2="570.25" stroke="#ff2020" stroke-width="1" /><text x="338" y="568.65" font-family="Liberation Sans" font-size="8.5" fill="#d8d820" text-anchor="middle" font-weight="bold" textLength="16" lengthAdjust="spacingAndGlyphs" >D10</text><text x="338" y="579.25" font-family="Liberation Sans" font-size="8.5" fill="#6cee70" text-anchor="middle" font-weight="normal" textLength="19" lengthAdjust="spacingAndGlyphs" >d=12</text><text x="353" y="569.0" font-family="Liberation Sans" font-size="12.5" fill="#6cee70" text-anchor="start" font-weight="normal" textLength="75" lengthAdjust="spacingAndGlyphs" >G=0.47 tf/m²</text><text x="353" y="581.5" font-family="Liberation Sans" font-size="12.5" fill="#6cee70" text-anchor="start" font-weight="normal" textLength="66" lengthAdjust="spacingAndGlyphs" >Q=0.2 tf/m²</text><circle cx="84.2" cy="18.9" r="9.7" fill="#000" stroke="#ff2020" stroke-width="1.1"/><text x="84.2" y="26.099999999999998" font-family="Liberation Sans" font-size="20" fill="#ffff00" text-anchor="middle" font-weight="normal" >A</text><circle cx="84.2" cy="695.75" r="9.7" fill="#000" stroke="#ff2020" stroke-width="1.1"/><text x="84.2" y="702.95" font-family="Liberation Sans" font-size="20" fill="#ffff00" text-anchor="middle" font-weight="normal" >A</text><circle cx="301.25" cy="18.9" r="9.7" fill="#000" stroke="#ff2020" stroke-width="1.1"/><text x="301.25" y="26.099999999999998" font-family="Liberation Sans" font-size="20" fill="#ffff00" text-anchor="middle" font-weight="normal" >B</text><circle cx="301.25" cy="695.75" r="9.7" fill="#000" stroke="#ff2020" stroke-width="1.1"/><text x="301.25" y="702.95" font-family="Liberation Sans" font-size="20" fill="#ffff00" text-anchor="middle" font-weight="normal" >B</text><circle cx="366.9" cy="18.9" r="9.7" fill="#000" stroke="#ff2020" stroke-width="1.1"/><text x="366.9" y="26.099999999999998" font-family="Liberation Sans" font-size="20" fill="#ffff00" text-anchor="middle" font-weight="normal" >C</text><circle cx="366.9" cy="695.75" r="9.7" fill="#000" stroke="#ff2020" stroke-width="1.1"/><text x="366.9" y="702.95" font-family="Liberation Sans" font-size="20" fill="#ffff00" text-anchor="middle" font-weight="normal" >C</text><circle cx="556" cy="18.9" r="9.7" fill="#000" stroke="#ff2020" stroke-width="1.1"/><text x="556" y="26.099999999999998" font-family="Liberation Sans" font-size="20" fill="#ffff00" text-anchor="middle" font-weight="normal" >D</text><circle cx="556" cy="695.75" r="9.7" fill="#000" stroke="#ff2020" stroke-width="1.1"/><text x="556" y="702.95" font-family="Liberation Sans" font-size="20" fill="#ffff00" text-anchor="middle" font-weight="normal" >D</text><circle cx="771.8" cy="18.9" r="9.7" fill="#000" stroke="#ff2020" stroke-width="1.1"/><text x="771.8" y="26.099999999999998" font-family="Liberation Sans" font-size="20" fill="#ffff00" text-anchor="middle" font-weight="normal" >E</text><circle cx="771.8" cy="695.75" r="9.7" fill="#000" stroke="#ff2020" stroke-width="1.1"/><text x="771.8" y="702.95" font-family="Liberation Sans" font-size="20" fill="#ffff00" text-anchor="middle" font-weight="normal" >E</text><circle cx="18.75" cy="85" r="9.7" fill="#000" stroke="#ff2020" stroke-width="1.1"/><text x="18.75" y="92.2" font-family="Liberation Sans" font-size="20" fill="#ffff00" text-anchor="middle" font-weight="normal" >1</text><circle cx="18.75" cy="243.25" r="9.7" fill="#000" stroke="#ff2020" stroke-width="1.1"/><text x="18.75" y="250.45" font-family="Liberation Sans" font-size="20" fill="#ffff00" text-anchor="middle" font-weight="normal" >2</text><circle cx="18.75" cy="325.7" r="9.7" fill="#000" stroke="#ff2020" stroke-width="1.1"/><text x="18.75" y="332.9" font-family="Liberation Sans" font-size="20" fill="#ffff00" text-anchor="middle" font-weight="normal" >3</text><circle cx="18.75" cy="548.1" r="9.7" fill="#000" stroke="#ff2020" stroke-width="1.1"/><text x="18.75" y="555.3000000000001" font-family="Liberation Sans" font-size="20" fill="#ffff00" text-anchor="middle" font-weight="normal" >4</text><circle cx="892.6" cy="84.9" r="9.7" fill="#000" stroke="#ff2020" stroke-width="1.1"/><text x="892.6" y="92.10000000000001" font-family="Liberation Sans" font-size="20" fill="#ffff00" text-anchor="middle" font-weight="normal" >1</text><rect x="533" y="119" width="761" height="475" fill="#ffffff" stroke="none" stroke-width="1" /><rect x="533" y="559" width="760" height="34" fill="#f0f0f0" stroke="none" stroke-width="1" /><path d="M1274.5,128.5 L1284,138 M1284,128.5 L1274.5,138" stroke="#111" stroke-width="1.1" fill="none" shape-rendering="geometricPrecision"/><text x="541" y="137.9" font-family="Liberation Sans" font-size="12.3" fill="#000" textLength="95" lengthAdjust="spacingAndGlyphs" text-anchor="start">Shearwall Settings</text><rect x="534.5" y="150.5" width="167.0" height="408.0" fill="#fff" stroke="#828790" stroke-width="1" /><path d="M703.5,559 V149.5 M1291.5,149 V559.5 M703,559.5 H1292" stroke="#e3e3e3" stroke-width="1" fill="none"/><defs><linearGradient id="hl" x1="0" y1="0" x2="0" y2="1"><stop offset="0" stop-color="#fde6c8"/><stop offset="0.52" stop-color="#f9cc98"/><stop offset="0.56" stop-color="#f6b04a"/><stop offset="0.85" stop-color="#fcd587"/><stop offset="1" stop-color="#fbb33c"/></linearGradient></defs><rect x="538.5" y="315.5" width="159" height="23.8" rx="1.5" fill="url(#hl)" stroke="#a88a5a" stroke-width="1"/><text x="546.4" y="169.95" font-family="Liberation Sans" font-size="11.5" fill="#000" textLength="84.2" lengthAdjust="spacingAndGlyphs" text-anchor="start">General Settings</text><text x="546.4" y="196.95" font-family="Liberation Sans" font-size="11.5" fill="#000" textLength="24.2" lengthAdjust="spacingAndGlyphs" text-anchor="start">Texts</text><text x="546.4" y="223.95" font-family="Liberation Sans" font-size="11.5" fill="#000" textLength="99.4" lengthAdjust="spacingAndGlyphs" text-anchor="start">Structural/Concrete</text><text x="546.4" y="250.95" font-family="Liberation Sans" font-size="11.5" fill="#000" textLength="99.1" lengthAdjust="spacingAndGlyphs" text-anchor="start">Thermal Parameters</text><text x="546.4" y="277.95" font-family="Liberation Sans" font-size="11.5" fill="#000" textLength="95" lengthAdjust="spacingAndGlyphs" text-anchor="start">Stiffness Modifiers</text><text x="546.4" y="304.95" font-family="Liberation Sans" font-size="11.5" fill="#000" textLength="107.3" lengthAdjust="spacingAndGlyphs" text-anchor="start">Performance Analysis</text><text x="546.4" y="331.95" font-family="Liberation Sans" font-size="11.5" fill="#5a5060" textLength="74.6" lengthAdjust="spacingAndGlyphs" text-anchor="start">Reinforcement</text><text x="546.4" y="358.95" font-family="Liberation Sans" font-size="11.5" fill="#000" textLength="124.4" lengthAdjust="spacingAndGlyphs" text-anchor="start">Reinf. Panel Anchorages</text><text x="546.4" y="385.95" font-family="Liberation Sans" font-size="11.5" fill="#000" textLength="136.2" lengthAdjust="spacingAndGlyphs" text-anchor="start">Reinf. Column Anchorages</text><text x="546.4" y="412.95" font-family="Liberation Sans" font-size="11.5" fill="#000" textLength="127.4" lengthAdjust="spacingAndGlyphs" text-anchor="start">Reinf. Jacket Anchorages</text><text x="546.4" y="439.95" font-family="Liberation Sans" font-size="11.5" fill="#000" textLength="128.2" lengthAdjust="spacingAndGlyphs" text-anchor="start">Punching reinforcements</text><text x="546.4" y="466.95" font-family="Liberation Sans" font-size="11.5" fill="#000" textLength="65.1" lengthAdjust="spacingAndGlyphs" text-anchor="start">Components</text><path d="M726,165.5 H718.5 V212.5 H1274.5 V165.5 H883.5" stroke="#dcdcdc" stroke-width="1" fill="none"/><path d="M724,227.5 H718.5 V336.5 H1274.5 V227.5 H831.5" stroke="#dcdcdc" stroke-width="1" fill="none"/><path d="M724,355.0 H718.5 V445.5 H1274.5 V355.0 H878.4" stroke="#dcdcdc" stroke-width="1" fill="none"/><rect x="727.5" y="159.5" width="12.0" height="12.0" fill="#fff" stroke="#333333" stroke-width="1" /><text x="742.7" y="169.7" font-family="Liberation Sans" font-size="11.5" fill="#000" textLength="124.7" lengthAdjust="spacingAndGlyphs" text-anchor="start">Reinforcement shearwall :</text><rect x="730.5" y="185.5" width="12.0" height="12.0" fill="#fff" stroke="#bcbcbc" stroke-width="1" /><path d="M732.5,191.5 L735,194.5 L740.5,188" stroke="#bcbcbc" stroke-width="1.2" fill="none" shape-rendering="geometricPrecision"/><text x="745.4" y="195.6" font-family="Liberation Sans" font-size="11.5" fill="#8a8a8a" textLength="183.8" lengthAdjust="spacingAndGlyphs" text-anchor="start">Use left column as head reinforcement</text><rect x="1003.5" y="185.5" width="12.0" height="12.0" fill="#fff" stroke="#bcbcbc" stroke-width="1" /><text x="1018" y="195.5" font-family="Liberation Sans" font-size="11.5" fill="#8a8a8a" textLength="190.9" lengthAdjust="spacingAndGlyphs" text-anchor="start">Use right column as head reinforcement</text><text x="726.3" y="232.0" font-family="Liberation Sans" font-size="11.5" fill="#000" textLength="102.2" lengthAdjust="spacingAndGlyphs" text-anchor="start">Head reinforcement :</text><text x="729.6" y="264.7" font-family="Liberation Sans" font-size="11.5" fill="#000" textLength="158.2" lengthAdjust="spacingAndGlyphs" text-anchor="start">Head / total reinforcement ratio :</text><rect x="901.5" y="249.5" width="59.0" height="22.0" fill="#fff" stroke="#7a7a7a" stroke-width="1" /><text x="906.6" y="263.3" font-family="Liberation Sans" font-size="11.5" fill="#000" textLength="16" lengthAdjust="spacingAndGlyphs" text-anchor="start">0.5</text><rect x="730.5" y="284.5" width="12.0" height="12.0" fill="#fff" stroke="#333333" stroke-width="1" /><path d="M732.5,290.5 L735,293.5 L740.5,287" stroke="#222" stroke-width="1.2" fill="none" shape-rendering="geometricPrecision"/><text x="745.4" y="295.2" font-family="Liberation Sans" font-size="11.5" fill="#000" textLength="102.1" lengthAdjust="spacingAndGlyphs" text-anchor="start">Short/head shearwall</text><text x="1002.6" y="257.8" font-family="Liberation Sans" font-size="11.5" fill="#000" textLength="164.1" lengthAdjust="spacingAndGlyphs" text-anchor="start">Head reinforcement area lengths :</text><circle cx="1009.5" cy="275.6" r="6.1" fill="#fff" stroke="#333" stroke-width="1" shape-rendering="geometricPrecision"/><circle cx="1009.5" cy="275.6" r="3.5" fill="#333" shape-rendering="geometricPrecision"/><text x="1018.7" y="280.2" font-family="Liberation Sans" font-size="11.5" fill="#000" textLength="121.5" lengthAdjust="spacingAndGlyphs" text-anchor="start">Let the program calculate</text><circle cx="1009.5" cy="295.5" r="6.1" fill="#fff" stroke="#333" stroke-width="1" shape-rendering="geometricPrecision"/><text x="1018.7" y="300.2" font-family="Liberation Sans" font-size="11.5" fill="#000" textLength="67.3" lengthAdjust="spacingAndGlyphs" text-anchor="start">User defined :</text><text x="1002.6" y="325.1" font-family="Liberation Sans" font-size="11.5" fill="#000" textLength="25.8" lengthAdjust="spacingAndGlyphs" text-anchor="start">Left :</text><rect x="1049.5" y="309.5" width="40.0" height="20.0" fill="#fff" stroke="#cccccc" stroke-width="1" /><text x="1054.5" y="322.8" font-family="Liberation Sans" font-size="11.5" fill="#8a8a8a" textLength="16" lengthAdjust="spacingAndGlyphs" text-anchor="start">0.5</text><text x="1093.7" y="325.1" font-family="Liberation Sans" font-size="11.5" fill="#8a8a8a" textLength="15.4" lengthAdjust="spacingAndGlyphs" text-anchor="start">[m]</text><text x="1147.6" y="325.1" font-family="Liberation Sans" font-size="11.5" fill="#000" textLength="31.4" lengthAdjust="spacingAndGlyphs" text-anchor="start">Right :</text><rect x="1198.5" y="309.5" width="40.0" height="20.0" fill="#fff" stroke="#cccccc" stroke-width="1" /><text x="1203.6" y="322.8" font-family="Liberation Sans" font-size="11.5" fill="#8a8a8a" textLength="16" lengthAdjust="spacingAndGlyphs" text-anchor="start">0.5</text><text x="1242.8" y="325.1" font-family="Liberation Sans" font-size="11.5" fill="#8a8a8a" textLength="15.4" lengthAdjust="spacingAndGlyphs" text-anchor="start">[m]</text><text x="726.3" y="358.6" font-family="Liberation Sans" font-size="11.5" fill="#000" textLength="148.7" lengthAdjust="spacingAndGlyphs" text-anchor="start">Reinforcement design options :</text><circle cx="736.2" cy="380" r="6.1" fill="#fff" stroke="#333" stroke-width="1" shape-rendering="geometricPrecision"/><text x="745.7" y="383.5" font-family="Liberation Sans" font-size="11.5" fill="#000" textLength="130.3" lengthAdjust="spacingAndGlyphs" text-anchor="start">Design as system shearwall</text><circle cx="736.2" cy="405.2" r="6.1" fill="#fff" stroke="#333" stroke-width="1" shape-rendering="geometricPrecision"/><text x="745.7" y="408.2" font-family="Liberation Sans" font-size="11.5" fill="#000" textLength="143.6" lengthAdjust="spacingAndGlyphs" text-anchor="start">Design as basement shearwall</text><circle cx="736.2" cy="429.4" r="6.1" fill="#fff" stroke="#333" stroke-width="1" shape-rendering="geometricPrecision"/><circle cx="736.2" cy="429.4" r="3.5" fill="#333" shape-rendering="geometricPrecision"/><text x="745.7" y="432.2" font-family="Liberation Sans" font-size="11.5" fill="#000" textLength="143.6" lengthAdjust="spacingAndGlyphs" text-anchor="start">Geometry defined (automatic)</text><rect x="730.5" y="459.5" width="12.0" height="12.0" fill="#fff" stroke="#333333" stroke-width="1" /><text x="745.7" y="470" font-family="Liberation Sans" font-size="11.5" fill="#000" textLength="197.4" lengthAdjust="spacingAndGlyphs" text-anchor="start">Always details outside on application plan</text><rect x="542.5" y="567.5" width="124.0" height="20.0" fill="#e1e1e1" stroke="#adadad" stroke-width="1" /><text x="565" y="582.3" font-family="Liberation Sans" font-size="11.5" fill="#000" textLength="56.7" lengthAdjust="spacingAndGlyphs" text-anchor="start">Favorites...</text><path d="M655,574.5 L659.5,578 L655,581.5Z" fill="#707070"/><rect x="1135" y="568" width="71" height="19" fill="#e1e1e1" stroke="#0078d7" stroke-width="2" /><text x="1152" y="582.1" font-family="Liberation Sans" font-size="11.5" fill="#000" textLength="34.3" lengthAdjust="spacingAndGlyphs" text-anchor="start">Tamam</text><rect x="1215.5" y="567.5" width="72.0" height="20.0" fill="#e1e1e1" stroke="#adadad" stroke-width="1" /><text x="1239.3" y="582.1" font-family="Liberation Sans" font-size="11.5" fill="#000" textLength="22" lengthAdjust="spacingAndGlyphs" text-anchor="start">İptal</text></svg>

</body></html>
